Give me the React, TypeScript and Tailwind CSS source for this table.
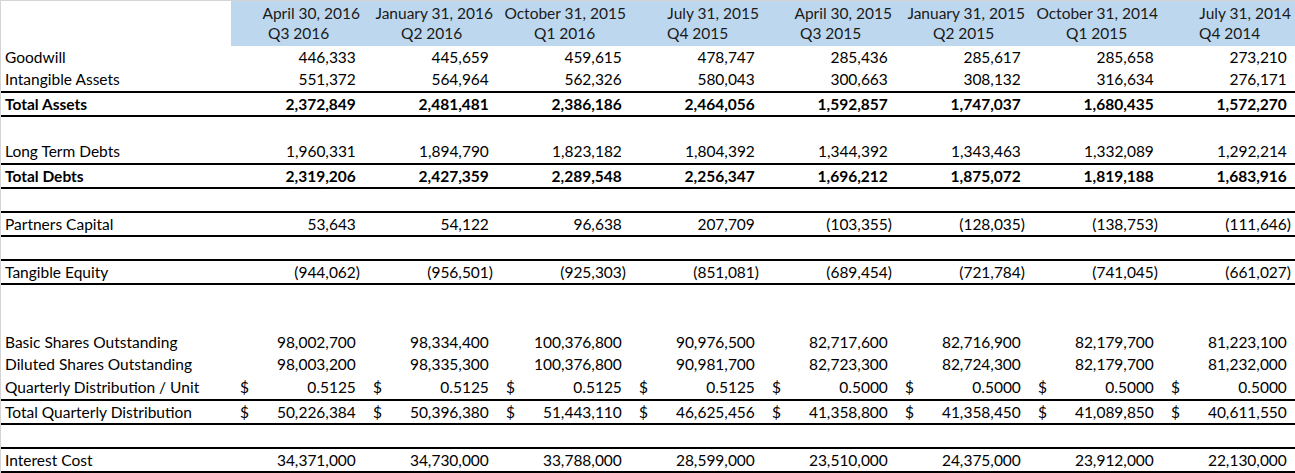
import React from "react";

// Quarterly balance sheet summary, laid out like a spreadsheet
const periods = [
  { date: "April 30, 2016", q: "Q3 2016" },
  { date: "January 31, 2016", q: "Q2 2016" },
  { date: "October 31, 2015", q: "Q1 2016" },
  { date: "July 31, 2015", q: "Q4 2015" },
  { date: "April 30, 2015", q: "Q3 2015" },
  { date: "January 31, 2015", q: "Q2 2015" },
  { date: "October 31, 2014", q: "Q1 2015" },
  { date: "July 31, 2014", q: "Q4 2014" },
];

type Row = {
  label?: string;
  values?: string[];
  bold?: boolean;
  dollar?: boolean;
  line?: boolean;
  h: string;
  pb?: string;
};

const rows: Row[] = [
  { label: "Goodwill", values: ["446,333", "445,659", "459,615", "478,747", "285,436", "285,617", "285,658", "273,210"], h: "h-[23px]" },
  { label: "Intangible Assets", values: ["551,372", "564,964", "562,326", "580,043", "300,663", "308,132", "316,634", "276,171"], h: "h-[23px]", line: true, pb: "pb-[3px]" },
  { label: "Total Assets", bold: true, values: ["2,372,849", "2,481,481", "2,386,186", "2,464,056", "1,592,857", "1,747,037", "1,680,435", "1,572,270"], h: "h-[22px]", line: true },
  { h: "h-[22px]" },
  { label: "Long Term Debts", values: ["1,960,331", "1,894,790", "1,823,182", "1,804,392", "1,344,392", "1,343,463", "1,332,089", "1,292,214"], h: "h-[24px]", line: true, pb: "pb-[3px]" },
  { label: "Total Debts", bold: true, values: ["2,319,206", "2,427,359", "2,289,548", "2,256,347", "1,696,212", "1,875,072", "1,819,188", "1,683,916"], h: "h-[22px]", line: true },
  { h: "h-[22px]", line: true },
  { label: "Partners Capital", values: ["53,643", "54,122", "96,638", "207,709", "(103,355)", "(128,035)", "(138,753)", "(111,646)"], h: "h-[22px]", line: true },
  { h: "h-[22px]", line: true },
  { label: "Tangible Equity", values: ["(944,062)", "(956,501)", "(925,303)", "(851,081)", "(689,454)", "(721,784)", "(741,045)", "(661,027)"], h: "h-[22px]", line: true },
  { h: "h-[23px]" },
  { h: "h-[23px]" },
  { label: "Basic Shares Outstanding", values: ["98,002,700", "98,334,400", "100,376,800", "90,976,500", "82,717,600", "82,716,900", "82,179,700", "81,223,100"], h: "h-[22px]" },
  { label: "Diluted Shares Outstanding", values: ["98,003,200", "98,335,300", "100,376,800", "90,981,700", "82,723,300", "82,724,300", "82,179,700", "81,232,000"], h: "h-[22px]" },
  { label: "Quarterly Distribution / Unit", dollar: true, values: ["0.5125", "0.5125", "0.5125", "0.5125", "0.5000", "0.5000", "0.5000", "0.5000"], h: "h-[24px]", line: true, pb: "pb-[3px]" },
  { label: "Total Quarterly Distribution", dollar: true, values: ["50,226,384", "50,396,380", "51,443,110", "46,625,456", "41,358,800", "41,358,450", "41,089,850", "40,611,550"], h: "h-[22px]", line: true },
  { h: "h-[22px]", line: true },
  { label: "Interest Cost", values: ["34,371,000", "34,730,000", "33,788,000", "28,599,000", "23,510,000", "24,375,000", "23,912,000", "22,130,000"], h: "h-[22px]", line: true },
];

const grid = "grid grid-cols-[230px_repeat(8,133px)]";

const Cell = ({ v, dollar, pb }: { v: string; dollar?: boolean; pb: string }) => {
  const neg = v.startsWith("(");
  return (
    <div className={`flex items-end justify-between pl-[9px] pr-[4px] ${pb}`}>
      <span>{dollar ? "$" : ""}</span>
      <span>
        {v}
        {!neg && <span className="invisible">)</span>}
      </span>
    </div>
  );
};

const App = () => {
  return (
    <div className="w-[1295px] h-[473px] overflow-hidden bg-white border-l border-t border-[#d4d4d4] text-[15.5px] leading-[18px] text-black font-['Lato','Liberation_Sans',sans-serif]">
      {/* Header */}
      <div className={`${grid} h-[23px]`}>
        <div />
        {periods.map((p) => (
          <div key={p.date} className="bg-[#bdd7ee] flex items-end justify-end pr-[4px] pb-[2px] whitespace-nowrap text-[#1a1a1a]">
            {p.date}
          </div>
        ))}
      </div>
      <div className={`${grid} h-[21px]`}>
        <div />
        {periods.map((p) => (
          <div key={p.q} className="bg-[#bdd7ee] flex items-end pl-[37px] pb-[4px] text-[#1a1a1a]">
            {p.q}
          </div>
        ))}
      </div>

      {/* Body rows */}
      {rows.map((r, i) => {
        const pb = r.pb ?? "pb-[2px]";
        return (
          <div
            key={i}
            className={`${grid} ${r.h} ${r.line ? "border-b-2 border-black box-content" : ""} ${r.bold ? "font-bold" : ""}`}
          >
            <div className={`flex items-end pl-[4px] whitespace-nowrap ${pb}`}>{r.label}</div>
            {r.values?.map((v, j) => <Cell key={j} v={v} dollar={r.dollar} pb={pb} />)}
          </div>
        );
      })}
    </div>
  );
};

export default App;
